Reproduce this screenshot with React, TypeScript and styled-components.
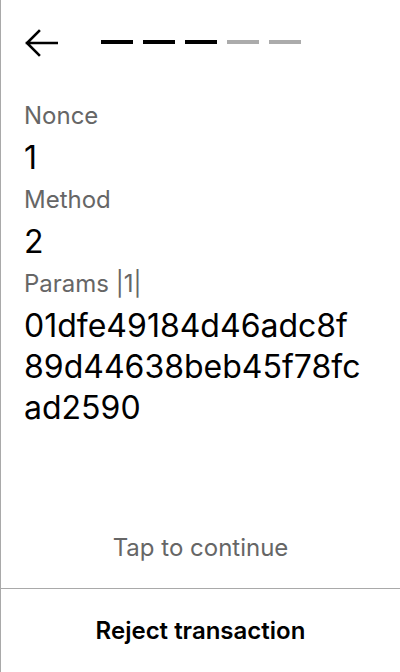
import React from 'react';
import styled, { createGlobalStyle } from 'styled-components';

const GlobalStyle = createGlobalStyle`
  html, body {
    margin: 0;
    padding: 0;
    background: #FFFFFF;
  }
  * {
    box-sizing: border-box;
  }
`

const Screen = styled.div`
  display: flex;
  flex-direction: column;
  width: 400px;
  height: 672px;
  border-left: 1px solid #A9A9A9;
  background: #FFFFFF;
  font-family: Inter, "Noto Sans", sans-serif;
  color: #000000;
`
const Header = styled.div`
  display: flex;
  align-items: center;
  gap: 43px;
  height: 86px;
  padding: 0 23px;
`
const BackButton = styled.button`
  display: flex;
  margin: 0;
  border: 0;
  padding: 0;
  background: none;
  cursor: pointer;
`
const Steps = styled.div`
  display: flex;
  gap: 10px;
  margin-top: -2px;
`
const Step = styled.div<{ $done: boolean }>`
  width: 32px;
  height: 4px;
  background: ${(p) => (p.$done ? '#000000' : '#ABABAB')};
`
const Body = styled.div`
  flex: 1;
  padding: 14px 23px 0;
`
const Field = styled.div`
  display: flex;
  flex-direction: column;
  gap: 5px;
  margin-bottom: 6px;
`
const Label = styled.div`
  font-size: 24px;
  line-height: 32px;
  color: #666666;
`
const Value = styled.div`
  font-size: 32px;
  line-height: 41px;
`
const ValueLine = styled.div`
  white-space: nowrap;
`
const Hint = styled.div`
  padding-bottom: 26px;
  font-size: 24px;
  line-height: 28px;
  text-align: center;
  color: #666666;
`
const Footer = styled.button`
  display: flex;
  align-items: center;
  justify-content: center;
  height: 84px;
  margin: 0;
  border: 0;
  border-top: 1px solid #A9A9A9;
  padding: 0;
  background: none;
  font-family: Inter, "Noto Sans", sans-serif;
  font-size: 24px;
  font-weight: 600;
  color: #000000;
  cursor: pointer;
`

type fieldType = {
  label: string,
  value: string
};
const fields: fieldType[] = [
  { label: 'Nonce', value: '1' },
  { label: 'Method', value: '2' },
  { label: 'Params |1|', value: '01dfe49184d46adc8f89d44638beb45f78fcad2590' },
];
const steps = [true, true, true, false, false];
const CHUNK = 18;

const chunk = (value: string) => value.match(new RegExp(`.{1,${CHUNK}}`, 'g')) || [value];

const ArrowLeft = () => (
  <svg width="34" height="28" viewBox="0 0 34 28" fill="none">
    <path d="M33 14H3M15 2L3 14L15 26" stroke="#000" strokeWidth="2.6" strokeLinecap="square" />
  </svg>
)

export default function App() {
  return (
    <>
      <GlobalStyle />
      <Screen>
        <Header>
          <BackButton><ArrowLeft /></BackButton>
          <Steps>
            { steps.map((done, i) => <Step key={i} $done={done} />) }
          </Steps>
        </Header>
        <Body>
          { fields.map((f) => (
            <Field key={f.label}>
              <Label>{ f.label }</Label>
              <Value>
                { chunk(f.value).map((line, i) => <ValueLine key={i}>{ line }</ValueLine>) }
              </Value>
            </Field>
          )) }
        </Body>
        <Hint>Tap to continue</Hint>
        <Footer>Reject transaction</Footer>
      </Screen>
    </>
  )
}
